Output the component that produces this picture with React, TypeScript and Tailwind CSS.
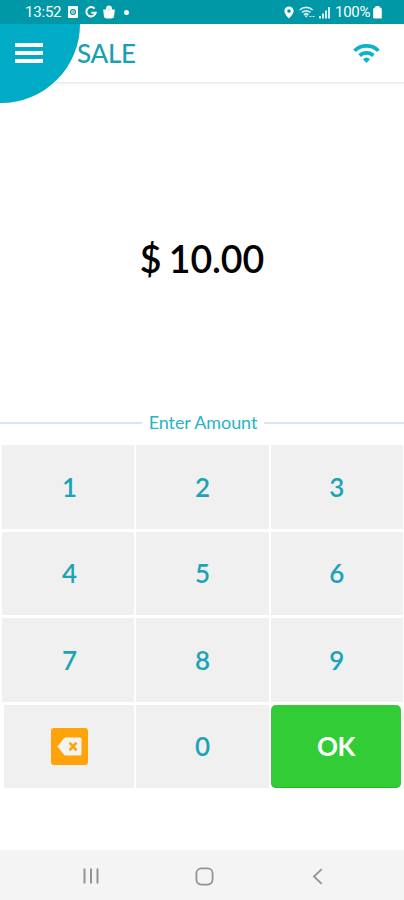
import React from "react";

function StatusBar() {
  return (
    <div className="flex h-6 items-center justify-between bg-[#0097a7] pr-[22px] pl-[25px] text-white">
      <div className="flex items-center">
        <span className="w-[37px] font-[Roboto,sans-serif] text-[15px] leading-6 tracking-[-0.2px] whitespace-nowrap">13:52</span>
        <svg className="ml-[6px]" width="10" height="12" viewBox="0 0 10 12">
          <rect width="10" height="12" rx="1" fill="#fff" />
          <circle cx="5" cy="6" r="2.4" fill="none" stroke="#0097a7" strokeWidth="1.3" />
          <path d="M5 5v2.2" stroke="#0097a7" strokeWidth="1" />
        </svg>
        <svg className="ml-[7px]" width="12" height="12" viewBox="0 0 12 12" fill="none" stroke="#fff" strokeWidth="2">
          <path d="M9.6 2.6A4.700 4.700 0 1 0 10.700 6.800H6.300" />
        </svg>
        <svg className="ml-[6px]" width="12" height="14" viewBox="0 0 12 14">
          <path d="M.2 4.500h11.600l-.7 6.500a2.400 2.400 0 0 1-2.400 2.400H3.300A2.400 2.400 0 0 1 .9 11z" fill="#fff" />
          <path d="M3.800 6V3.400a2.200 2.200 0 0 1 4.400 0V6" fill="#d5eef1" stroke="#fff" strokeWidth="1.400" />
        </svg>
        <span className="ml-[9px] size-[5px] rounded-full bg-white" />
      </div>
      <div className="flex items-center">
        <svg width="10" height="13" viewBox="0 0 10 13">
          <path fill="#fff" fillRule="evenodd" d="M5 .5A4.600 4.600 0 0 0 .4 5.100C.4 8.500 5 12.600 5 12.600s4.600-4.100 4.600-7.500A4.600 4.600 0 0 0 5 .5zm0 2.800a1.800 1.800 0 1 1 0 3.600 1.800 1.800 0 0 1 0-3.600z" />
        </svg>
        <svg className="ml-[5px]" width="17" height="13" viewBox="0 0 17 13" fill="none" stroke="#d5eef1" strokeWidth="1.700">
          <path d="M.7 4a9.500 9.500 0 0 1 13 0M2.900 6.500a6.300 6.300 0 0 1 8.600 0M5 8.800a3.200 3.200 0 0 1 4.400 0" />
          <path d="M5.500 9.500h3.400L7.200 11.800z" fill="#d5eef1" stroke="none" />
          <path d="M10.500 10.500h2M13.500 10.500h2" strokeWidth="1.200" />
        </svg>
        <svg className="ml-[3px]" width="12" height="13" viewBox="0 0 12 13" fill="#d5eef1">
          <path d="M0 10h2v2.500H0zM3 7.500h2v5H3zM6 4.500h2v8H6zM9 1h2v11.500H9z" />
        </svg>
        <span className="ml-[4px] w-[36px] font-[Roboto,sans-serif] text-[15px] leading-6 tracking-[-0.25px] whitespace-nowrap">100%</span>
        <svg className="ml-[2px]" width="9" height="13" viewBox="0 0 9 13" fill="#fff">
          <path d="M2.500 0h4v1.500H7A1.800 1.800 0 0 1 8.800 3.300v8.400a.8.8 0 0 1-.8.800H1a.8.8 0 0 1-.8-.8V3.300A1.800 1.800 0 0 1 2 1.500h.5z" />
        </svg>
      </div>
    </div>
  );
}

function Header() {
  return (
    <header className="relative flex h-[59px] items-center justify-between border-b border-[#ececec] bg-white pr-6 shadow-[0_1px_2px_rgba(0,0,0,0.08)]">
      <button aria-label="Menu" className="absolute top-0 left-0 h-[79px] w-[79.500px] rounded-br-full bg-[#00acc5]">
        <span className="absolute top-[19px] left-[15px] flex w-7 flex-col gap-[4px]">
          <span className="h-[4px] bg-white" />
          <span className="h-[4px] bg-white" />
          <span className="h-[4px] bg-white" />
        </span>
      </button>
      <h1 className="relative ml-[77px] text-[26px] leading-[59px] font-medium tracking-[-0.3px] text-[#1b9fb2]">SALE</h1>
      <svg width="27" height="20" viewBox="0 0 27 20" fill="none" stroke="#08b4c9" strokeWidth="3.600">
        <path d="M1.500 7.700a17.300 17.300 0 0 1 24 0M6.600 12.600a10 10 0 0 1 13.800 0" />
        <path d="M10 16.200a5.200 5.200 0 0 1 7 0L13.500 20z" fill="#08b4c9" stroke="none" />
      </svg>
    </header>
  );
}

const digitRows = [
  ["1", "2", "3"],
  ["4", "5", "6"],
  ["7", "8", "9"],
];

const keyClass = "flex h-[83.500px] items-center justify-center bg-[#f0f0f0] pt-px text-[26px] font-semibold text-[#1ca3b7]";

function Keypad() {
  return (
    <div className="flex flex-col gap-[3px] pt-[9px]">
      {digitRows.map((row) => (
        <div key={row[0]} className="grid grid-cols-3 gap-x-[2px] pr-px pl-[2px]">
          {row.map((digit) => (
            <button key={digit} className={`${keyClass} first:pl-[3px]`}>{digit}</button>
          ))}
        </div>
      ))}
      <div className="grid grid-cols-[130px_133px_130px] gap-x-[2px] pl-[4px]">
        <button aria-label="Delete" className="flex h-[83.500px] items-center justify-center bg-[#f0f0f0]">
          <span className="flex size-[37px] items-center justify-center rounded-[3px] bg-[#ffa30a]">
            <svg width="25" height="19" viewBox="0 0 25 19">
              <path d="M8.500.5H23A1.500 1.500 0 0 1 24.500 2v15a1.500 1.500 0 0 1-1.500 1.500H8.500a2 2 0 0 1-1.500-.7L.5 9.500 7 1.200A2 2 0 0 1 8.500.5z" fill="#f3f3f1" />
              <path d="M12.500 5.700l7 7.600M19.500 5.700l-7 7.600" stroke="#ffa30a" strokeWidth="2.500" />
            </svg>
          </span>
        </button>
        <button className={keyClass}>0</button>
        <button className="flex h-[83.500px] items-center justify-center rounded-[5px] border-b border-[#19bd20] bg-[#32cd36] pt-[2px] text-[26px] font-bold tracking-[-0.4px] text-white">OK</button>
      </div>
    </div>
  );
}

function NavigationBar() {
  return (
    <nav className="mt-auto flex h-[50px] items-center gap-[95px] bg-[#f4f4f4] pt-[2px] pl-[82px]">
      <svg width="18" height="18" viewBox="0 0 18 18" stroke="#929292" strokeWidth="2">
        <path d="M2.500 1.500v15M9 1.500v15M15.500 1.500v15" />
      </svg>
      <svg width="19" height="19" viewBox="0 0 19 19" fill="none" stroke="#929292" strokeWidth="1.800">
        <rect x="1.400" y="1.400" width="16.200" height="16.200" rx="5" />
      </svg>
      <svg className="ml-[3px]" width="11" height="17" viewBox="0 0 11 17" fill="none" stroke="#929292" strokeWidth="1.800">
        <path d="M9.700 1.200L2 8.500l7.700 7.300" />
      </svg>
    </nav>
  );
}

export default function App() {
  return (
    <div className="flex h-[900px] w-[404px] flex-col overflow-hidden bg-white font-[Lato,sans-serif]">
      <StatusBar />
      <Header />
      <main>
        <div className="flex h-[327px] items-center justify-center pt-[26px] text-[37.500px] font-semibold tracking-[-0.1px] text-black [word-spacing:-2px]">$ 10.00</div>
        <div className="flex h-[26px] items-center">
          <div className="h-[2px] w-[142px] bg-[#d3e9f1]" />
          <span className="-mt-[2px] flex-1 text-center text-[18px] leading-[26px] tracking-[-0.1px] text-[#29b3c7]">Enter Amount</span>
          <div className="h-[2px] w-[140px] bg-[#d3e9f1]" />
        </div>
        <Keypad />
      </main>
      <NavigationBar />
    </div>
  );
}
